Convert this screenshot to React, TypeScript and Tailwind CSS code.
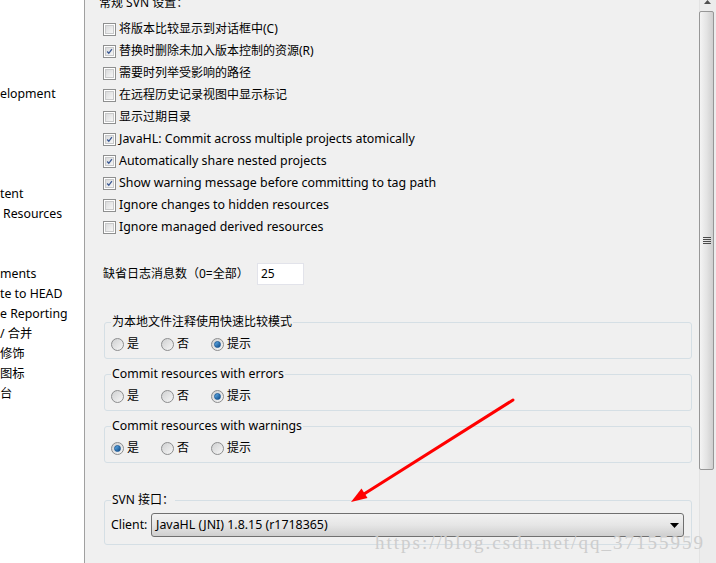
import React from "react";

const uiFont = {
  fontFamily: '"Noto Sans", "Noto Sans CJK SC", sans-serif',
};

const treeItems: { text: string; row: number; indent?: string }[] = [
  { text: "elopment", row: 4 },
  { text: "tent", row: 9 },
  { text: "Resources", row: 10, indent: "pl-[3px]" },
  { text: "ments", row: 13 },
  { text: "te to HEAD", row: 14 },
  { text: "e Reporting", row: 15 },
  { text: "/ 合并", row: 16 },
  { text: "修饰", row: 17 },
  { text: "图标", row: 18 },
  { text: "台", row: 19 },
];

const checks: { label: string; checked: boolean; latin?: boolean }[] = [
  { label: "将版本比较显示到对话框中(C)", checked: false },
  { label: "替换时删除未加入版本控制的资源(R)", checked: true },
  { label: "需要时列举受影响的路径", checked: false },
  { label: "在远程历史记录视图中显示标记", checked: false },
  { label: "显示过期目录", checked: false },
  { label: "JavaHL: Commit across multiple projects atomically", checked: true, latin: true },
  { label: "Automatically share nested projects", checked: true, latin: true },
  { label: "Show warning message before committing to tag path", checked: true, latin: true },
  { label: "Ignore changes to hidden resources", checked: false, latin: true },
  { label: "Ignore managed derived resources", checked: false, latin: true },
];

const groups: { title: string; selected: number; latin?: boolean }[] = [
  { title: "为本地文件注释使用快速比较模式", selected: 2 },
  { title: "Commit resources with errors", selected: 2, latin: true },
  { title: "Commit resources with warnings", selected: 0, latin: true },
];

const Checkbox = ({ checked }: { checked: boolean }) => (
  <div className="w-[13px] h-[13px] border border-[#8e8f8f] bg-white p-[1px] shrink-0">
    <div className="relative w-full h-full bg-gradient-to-br from-[#dadbdc] to-[#f6f6f6] border border-[#c8c9ca]">
      {checked && (
        <svg viewBox="0 0 9 9" className="absolute inset-0 w-full h-full">
          <path
            d="M1.5 4.5 L3.6 6.8 L7.6 1.4"
            fill="none"
            stroke="#3a5893"
            strokeWidth="1.6"
          />
        </svg>
      )}
    </div>
  </div>
);

const Radio = ({ on }: { on: boolean }) => (
  <div className="w-[13px] h-[13px] rounded-full border border-[#8c8d8e] bg-gradient-to-br from-[#cfd0d1] to-[#f7f7f7] flex items-center justify-center shrink-0">
    {on && (
      <div className="w-[7px] h-[7px] rounded-full bg-gradient-to-br from-[#64b3ee] to-[#0c4a86] border border-[#1c5a98]" />
    )}
  </div>
);

const Group = ({
  title,
  latin,
  className,
  children,
}: {
  title: string;
  latin?: boolean;
  className: string;
  children: React.ReactNode;
}) => (
  <fieldset
    className={`ml-[1px] mr-[7px] border border-[#d5dfe5] rounded-[3px] pl-[6px] ${className}`}
  >
    <legend
      className={`px-[1px] leading-[16px] ${latin ? "text-[12.3px]" : ""}`}
    >
      {title}
    </legend>
    {children}
  </fieldset>
);

export default function App() {
  return (
    <div
      className="relative w-[716px] h-[563px] overflow-hidden flex text-[12px] text-black bg-[#f0f0f0]"
      style={uiFont}
    >
      {/* tree on the left, scrolled sideways */}
      <div className="w-[85px] shrink-0 bg-white border-r border-[#a0a0a0] overflow-hidden pt-[4px]">
        {Array.from({ length: 22 }).map((_, i) => {
          const item = treeItems.find((t) => t.row === i);
          return (
            <div
              key={i}
              className={`h-[20px] leading-[20px] whitespace-nowrap text-[12.3px] ${item?.indent ?? ""}`}
            >
              {item?.text ?? ""}
            </div>
          );
        })}
      </div>

      {/* settings page */}
      <div className="flex-1 flex flex-col pl-[18px]">
        <div className="-mt-[7px] h-[16px] leading-[16px] -ml-[4px]">
          <span className="inline-block translate-y-[2px]">常规 SVN 设置：</span>
        </div>

        <div className="mt-[9px] flex flex-col">
          {checks.map((c) => (
            <div key={c.label} className="h-[22px] flex items-center gap-[3px]">
              <Checkbox checked={c.checked} />
              <span className={`whitespace-nowrap ${c.latin ? "text-[12.4px]" : ""}`}>
                {c.label}
              </span>
            </div>
          ))}
        </div>

        <div className="mt-[25px] h-[22px] flex items-center">
          <span className="w-[154px] whitespace-nowrap">缺省日志消息数（0=全部）</span>
          <div className="w-[47px] h-[22px] bg-white border border-[#e2e3ea] pl-[3px] flex items-center">
            25
          </div>
        </div>

        {groups.map((g, gi) => (
          <Group
            key={g.title}
            title={g.title}
            latin={g.latin}
            className={`${gi === 0 ? "mt-[29px]" : "mt-[7px]"} pt-[6px] pb-[6px]`}
          >
            <div className="h-[16px] flex items-center">
              {["是", "否", "提示"].map((opt, oi) => (
                <div key={opt} className="w-[50px] flex items-center gap-[3px]">
                  <Radio on={oi === g.selected} />
                  <span>{opt}</span>
                </div>
              ))}
            </div>
          </Group>
        ))}

        <Group title="SVN 接口：" className="mt-[29px] pt-[5px] pb-[7px]">
          <div className="flex items-center h-[24px]">
            <span className="w-[40px] text-[12.3px]">Client:</span>
            <div className="w-[533px] h-[24px] rounded-[3px] border border-[#707070] bg-gradient-to-b from-[#f2f2f2] via-[#e6e6e6] to-[#cfcfcf] flex items-center pl-[4px] pr-[4px]">
              <span className="flex-1 text-[12.4px]">JavaHL (JNI) 1.8.15 (r1718365)</span>
              <svg width="9" height="5" viewBox="0 0 9 5">
                <path d="M0 0 H9 L4.5 5 Z" fill="#000" />
              </svg>
            </div>
          </div>
        </Group>
      </div>

      {/* vertical scrollbar */}
      <div className="w-[17px] shrink-0 flex flex-col bg-[#ececec] border-l border-[#e3e3e3]">
        <div className="h-[11px] flex justify-center items-start pr-[2px]">
          <svg width="7" height="4" viewBox="0 0 7 4">
            <path d="M0 4 L3.5 0 L7 4 Z" fill="#505050" />
          </svg>
        </div>
        <div className="h-[459px] mr-[2px] -ml-[1px] rounded-[2px] border border-[#979797] bg-gradient-to-r from-[#f4f4f4] via-[#e4e4e4] to-[#cfcfcf] flex items-center justify-center">
          <div className="flex flex-col gap-[1px]">
            <div className="w-[8px] h-[1px] bg-[#4a4a4a]" />
            <div className="w-[8px] h-[1px] bg-[#4a4a4a]" />
            <div className="w-[8px] h-[1px] bg-[#4a4a4a]" />
            <div className="w-[8px] h-[1px] bg-[#4a4a4a]" />
          </div>
        </div>
        <div className="flex-1" />
      </div>

      {/* annotation arrow */}
      <svg
        className="absolute left-0 top-0 pointer-events-none"
        width="716"
        height="563"
      >
        <line
          x1="513"
          y1="400"
          x2="364"
          y2="494"
          stroke="#ff0000"
          strokeWidth="3"
          strokeLinecap="round"
        />
        <polygon points="351,502 367.5,498 361.5,488.5" fill="#ff0000" />
      </svg>

      {/* watermark */}
      <div
        className="absolute left-[375px] top-[529px] text-[19px] tracking-[2px] text-[#cdcdcd] whitespace-nowrap pointer-events-none"
        style={{ fontFamily: '"Liberation Serif", serif' }}
      >
        https://blog.csdn.net/qq_37155959
      </div>
    </div>
  );
}
